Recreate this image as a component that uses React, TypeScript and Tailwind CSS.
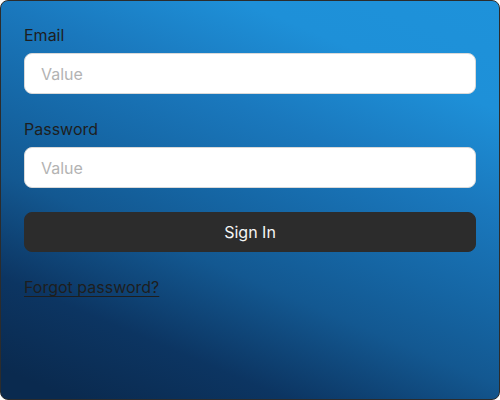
export default function App() {
  return (
    <main className="h-[400px] w-[500px] font-['Inter',sans-serif]">
      <form
        className="flex h-full w-full flex-col gap-6 rounded-lg border border-[#2c2c2c] bg-[linear-gradient(203deg,#1e92da_0%,#1e90d8_18%,#1a78bd_35%,#1565a3_52%,#135891_63%,#0c3562_80%,#0a2a4f_95%)] p-[23px]"
        onSubmit={(e) => e.preventDefault()}
      >
        <label className="flex flex-col gap-[7px]">
          <span className="text-base leading-[22px] text-[#1e1e1e]">Email</span>
          <input
            type="email"
            placeholder="Value"
            className="h-[41px] w-full rounded-lg border border-[#d9d9d9] bg-white px-4 text-base text-[#1e1e1e] outline-none placeholder:text-[#b3b3b3]"
          />
        </label>

        <label className="flex flex-col gap-[7px]">
          <span className="text-base leading-[22px] text-[#1e1e1e]">
            Password
          </span>
          <input
            type="password"
            placeholder="Value"
            className="h-[41px] w-full rounded-lg border border-[#d9d9d9] bg-white px-4 text-base text-[#1e1e1e] outline-none placeholder:text-[#b3b3b3]"
          />
        </label>

        <button
          type="submit"
          className="h-10 w-full rounded-lg border border-[#2c2c2c] bg-[#2c2c2c] text-base text-[#f5f5f5]"
        >
          Sign In
        </button>

        <a
          href="#"
          className="self-start text-base leading-[1.4] text-[#1e1e1e] underline underline-offset-[3px]"
        >
          Forgot password?
        </a>
      </form>
    </main>
  );
}
